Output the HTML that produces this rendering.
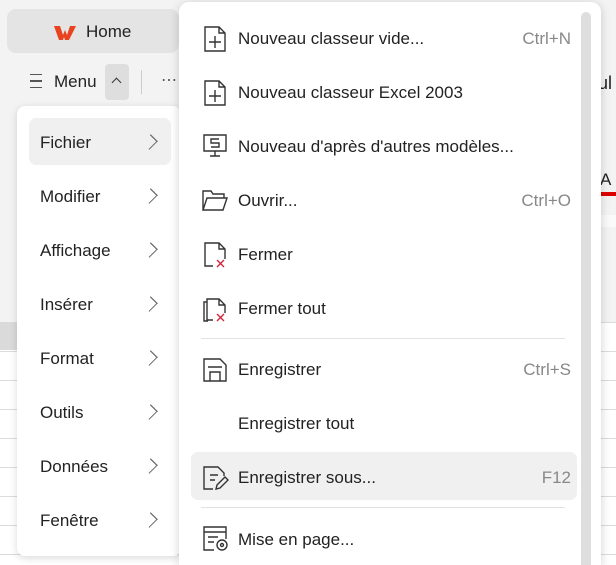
<!DOCTYPE html><html><head><style>
*{margin:0;padding:0;box-sizing:border-box}
html,body{width:616px;height:565px;overflow:hidden}
body{background:#f3f3f3;font-family:"Liberation Sans",sans-serif;position:relative;color:#222}
.abs{position:absolute}
.grid{left:0;top:322px;width:616px;height:243px;background:#fff;background-image:linear-gradient(#dcdcdc 1px,transparent 1px);background-size:100% 29px}
.lm{left:17px;top:106px;width:164px;height:450px;background:#fff;border-radius:8px;box-shadow:0 2px 8px rgba(0,0,0,.15)}
.li{position:absolute;left:23px;font-size:17px;color:#222}
.ch{position:absolute;left:128px;width:10px;height:10px;border-right:1.2px solid #666;border-top:1.2px solid #666;transform:rotate(45deg) scaleY(1.2)}
.rm{left:179px;top:2px;width:422px;height:563px;background:#fff;border-radius:10px 10px 0 0;box-shadow:0 2px 10px rgba(0,0,0,.18)}
.ri{position:absolute;left:59px;font-size:17px;color:#222}
.sc{position:absolute;right:30px;font-size:17px;color:#888}
.ic{position:absolute;left:24px}
.sep{position:absolute;left:22px;width:364px;height:1px;background:#e2e2e2}
</style></head><body>
<div class="abs grid"></div>
<div class="abs" style="left:0;top:322px;width:20px;height:28px;background:#dadada"></div>
<div class="abs" style="left:600px;top:215px;width:16px;height:12px;background:#fafafa"></div>
<div class="abs" style="left:600px;top:192px;width:16px;height:4px;background:#d00"></div>
<div class="abs" style="left:600px;top:170px;font-size:17px">A</div>
<div class="abs" style="left:598px;top:73px;font-size:18px">ul</div>
<div class="abs" style="left:7px;top:9px;width:172px;height:44px;background:#e4e4e4;border-radius:9px"></div>
<svg class="abs" style="left:53px;top:24px" width="24" height="18" viewBox="0 0 24 18"><path d="M1 2h6l3 9 2-5 2 5 3-9h6l-7 14h-4l-1-3-1 3h-4z" fill="#e8421e"/></svg>
<div class="abs" style="left:86px;top:22px;font-size:17px">Home</div>
<div class="abs" style="left:30px;top:74px;width:12px;height:14px;border-top:1.5px solid #555;border-bottom:1.5px solid #555"><div style="margin-top:5px;height:1.5px;background:#555"></div></div>
<div class="abs" style="left:54px;top:72px;font-size:17px">Menu</div>
<div class="abs" style="left:105px;top:64px;width:24px;height:36px;background:#dedede;border-radius:4px"></div>
<div class="abs" style="left:113px;top:79px;width:7px;height:7px;border-left:1.5px solid #333;border-top:1.5px solid #333;transform:rotate(45deg)"></div>
<div class="abs" style="left:141px;top:70px;width:1px;height:24px;background:#ccc"></div>
<div class="abs" style="left:161px;top:70px;font-size:16px;color:#555">⋯</div>
<div class="abs lm">
<div class="abs" style="left:12px;top:12px;width:142px;height:47px;background:#f0f0f0;border-radius:7px"></div>
<div class="li" style="top:27px">Fichier</div><div class="ch" style="top:31px"></div>
<div class="li" style="top:81px">Modifier</div><div class="ch" style="top:85px"></div>
<div class="li" style="top:135px">Affichage</div><div class="ch" style="top:139px"></div>
<div class="li" style="top:189px">Insérer</div><div class="ch" style="top:193px"></div>
<div class="li" style="top:243px">Format</div><div class="ch" style="top:247px"></div>
<div class="li" style="top:297px">Outils</div><div class="ch" style="top:301px"></div>
<div class="li" style="top:351px">Données</div><div class="ch" style="top:355px"></div>
<div class="li" style="top:405px">Fenêtre</div><div class="ch" style="top:409px"></div>
</div>
<div class="abs rm">
<div class="abs" style="left:402px;top:10px;width:10px;height:553px;background:#dedede;border-radius:5px 5px 0 0"></div>
<div class="abs" style="left:12px;top:450px;width:386px;height:48px;background:#f0f0f0;border-radius:7px"></div>
<svg class="ic" style="top:24px" width="24" height="26" viewBox="0 0 24 26" fill="none" stroke="#333" stroke-width="1.4"><path d="M2 1h14l6 6v18H2z M16 1v6h6 M12 10v12 M6 16h12"/></svg>
<div class="ri" style="top:27px">Nouveau classeur vide...</div><div class="sc" style="top:27px">Ctrl+N</div>
<svg class="ic" style="top:78px" width="24" height="26" viewBox="0 0 24 26" fill="none" stroke="#333" stroke-width="1.4"><path d="M2 1h14l6 6v18H2z M16 1v6h6 M12 10v12 M6 16h12"/></svg>
<div class="ri" style="top:81px">Nouveau classeur Excel 2003</div>
<svg class="ic" style="top:132px" width="24" height="24" viewBox="0 0 24 24" fill="none" stroke="#333" stroke-width="1.4"><path d="M1 1h22v16H1z M12 17v5 M7 22h10 M16 5H8v4h8v4H8"/></svg>
<div class="ri" style="top:135px">Nouveau d'après d'autres modèles...</div>
<svg class="ic" style="top:187px;left:23px" width="26" height="22" viewBox="0 0 26 22" fill="none" stroke="#333" stroke-width="1.4"><path d="M1 21V2h8l2 3h11v4 M1 21h20l4-12H5z"/></svg>
<div class="ri" style="top:189px">Ouvrir...</div><div class="sc" style="top:189px">Ctrl+O</div>
<svg class="ic" style="top:240px" width="26" height="26" viewBox="0 0 26 26" fill="none" stroke-width="1.4"><path d="M10 24H2V1h14l6 6v10 M16 1v6h6" stroke="#333"/><path d="M14 18l7 7 M21 18l-7 7" stroke="#d2243c"/></svg>
<div class="ri" style="top:243px">Fermer</div>
<svg class="ic" style="top:294px" width="26" height="26" viewBox="0 0 26 26" fill="none" stroke-width="1.4"><path d="M10 24H4V3h12l6 6v8 M16 3v6h6 M4 6H1v19h4" stroke="#333"/><path d="M14 18l7 7 M21 18l-7 7" stroke="#d2243c"/></svg>
<div class="ri" style="top:297px">Fermer tout</div>
<div class="sep" style="top:336px"></div>
<svg class="ic" style="top:356px" width="24" height="24" viewBox="0 0 24 24" fill="none" stroke="#333" stroke-width="1.4"><path d="M1 1h16l6 6v16H1z M5 9h14 M7 23v-9h10v9"/></svg>
<div class="ri" style="top:358px">Enregistrer</div><div class="sc" style="top:358px">Ctrl+S</div>
<div class="ri" style="top:412px">Enregistrer tout</div>
<svg class="ic" style="top:464px" width="26" height="24" viewBox="0 0 26 24" fill="none" stroke="#333" stroke-width="1.4"><path d="M10 23H1V1h14l6 6v3 M7 9h8 M7 14h5 M13 23l1-4 8-8 3 3-8 8z"/></svg>
<div class="ri" style="top:466px">Enregistrer sous...</div><div class="sc" style="top:466px">F12</div>
<div class="sep" style="top:505px"></div>
<svg class="ic" style="top:524px" width="26" height="26" viewBox="0 0 26 26" fill="none" stroke="#333" stroke-width="1.4"><path d="M11 24H1V1h22v12 M1 6h22 M5 11h10 M5 16h6"/><circle cx="19" cy="19" r="5"/><circle cx="19" cy="19" r="1.5"/></svg>
<div class="ri" style="top:528px">Mise en page...</div>
</div>
</body></html>
